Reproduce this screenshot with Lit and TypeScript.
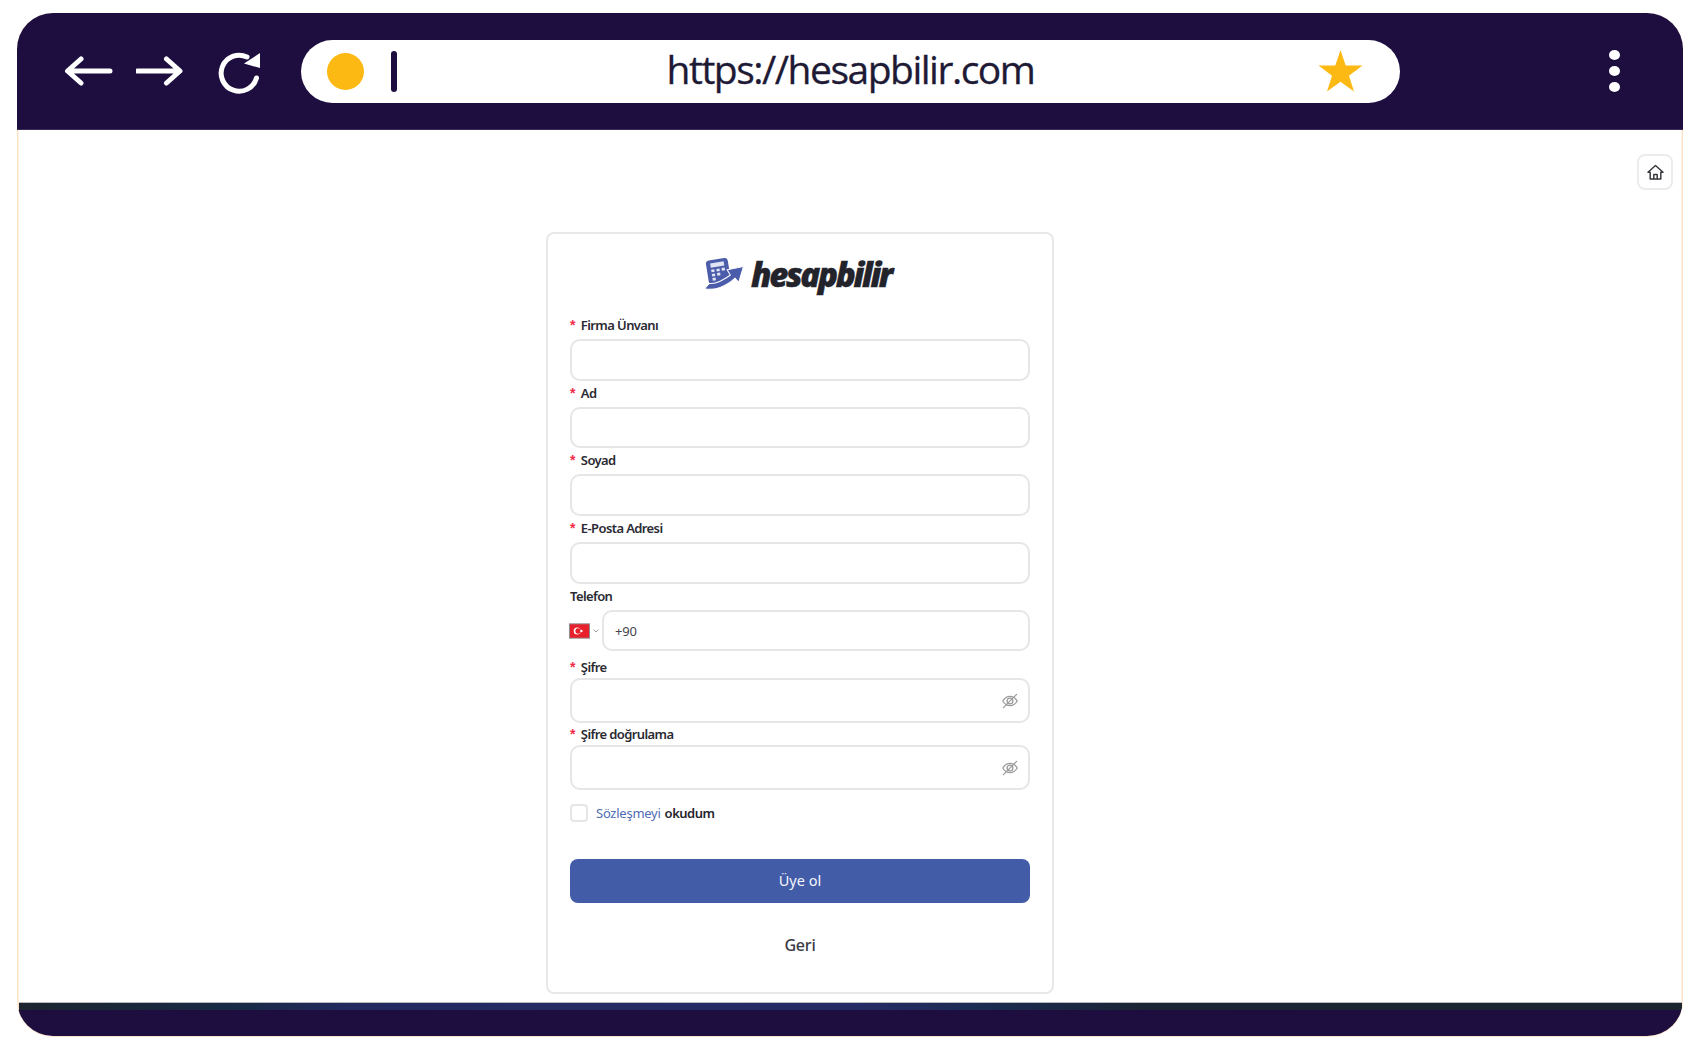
import { LitElement, html, css, svg } from "lit";
import { customElement } from "lit/decorators.js";

const eye = svg`<svg class="eye" viewBox="0 0 18 18" width="18" height="18" fill="none" stroke="#9c9c9c" stroke-width="1.3" stroke-linecap="round"><path d="M1.8 9C3.6 5.9 6 4.3 9 4.3S14.4 5.9 16.2 9C14.4 12.1 12 13.7 9 13.7S3.6 12.1 1.8 9Z"/><circle cx="9" cy="9" r="2.9"/><path d="M15.6 2.4 2.4 15.6"/></svg>`;

type Field = { label: string; req: boolean; kind?: "phone" | "pw"; tight?: boolean };
const fields: Field[] = [
  { label: "Firma Ünvanı", req: true },
  { label: "Ad", req: true },
  { label: "Soyad", req: true },
  { label: "E-Posta Adresi", req: true },
  { label: "Telefon", req: false, kind: "phone" },
  { label: "Şifre", req: true, kind: "pw" },
  { label: "Şifre doğrulama", req: true, kind: "pw", tight: true },
];

@customElement("app-root")
export class AppRoot extends LitElement {
  static styles = css`
    :host { display: block; width: 1700px; height: 1050px; padding: 13px 17px 14px; box-sizing: border-box; background: #fff; font-family: "Noto Sans", "Open Sans", sans-serif; color: #2a2a33; }
    .frame { height: 1023px; display: flex; flex-direction: column; border-radius: 36px; overflow: hidden; background: #fff; box-shadow: inset 1.5px 0 0 #fde4c8, inset -1.5px 0 0 #fde4c8, 0 1px 0 #fde4c8; }
    header { height: 117px; flex: none; background: #1e0e40; display: flex; align-items: center; box-sizing: border-box; border-bottom: 1px solid #3a2d58; }
    .navs { display: flex; align-items: center; width: 284px; flex: none; padding-left: 47px; box-sizing: border-box; gap: 23px; }
    .navs svg { display: block; flex: none; }
    .navs .reload { margin-left: 8px; margin-top: 1px; }
    .addr { width: 1099px; height: 63px; flex: none; border-radius: 32px; background: #fff; display: grid; grid-template-columns: 1fr auto 1fr; align-items: center; }
    .addr-l { display: flex; align-items: center; padding-left: 26px; gap: 27px; }
    .dot { width: 37px; height: 37px; border-radius: 50%; background: #fdb913; }
    .sep { width: 6px; height: 41px; border-radius: 3px; background: #1e0e40; }
    .url { font-family: "Open Sans", sans-serif; font-size: 39px; letter-spacing: -1.5px; color: #1e1a35; line-height: 63px; margin-top: -5px; -webkit-text-stroke: 0.3px #1e1a35; }
    .addr-r { display: flex; justify-content: flex-end; padding-right: 37px; }
    .menu { margin-left: 209px; display: flex; flex-direction: column; gap: 6px; }
    .menu i { display: block; width: 11px; height: 10px; border-radius: 50%; background: #fff; }
    main { flex: 1; position: relative; padding: 102px 0 0 529px; box-sizing: border-box; min-height: 0; }
    .home { position: absolute; top: 24px; right: 10px; width: 36px; height: 36px; box-sizing: border-box; border: 2px solid #ececec; border-radius: 8px; display: flex; align-items: center; justify-content: center; background: #fff; }
    .card { width: 508px; height: 762px; box-sizing: border-box; border: 2px solid #e8e8e8; border-radius: 8px; padding: 0 22px; background: #fff; }
    .logo { height: 79px; display: flex; align-items: center; justify-content: center; gap: 7px; padding: 2px 5px 0 0; box-sizing: border-box; }
    .logo svg { flex: none; }
    .wordmark { font-family: "Open Sans", sans-serif; font-weight: 800; font-style: italic; font-size: 33px; letter-spacing: -2.3px; color: #23232b; line-height: 40px; -webkit-text-stroke: 0.4px #23232b; }
    .lbl { height: 26.17px; display: flex; align-items: flex-end; padding-bottom: 5px; box-sizing: border-box; font-size: 13px; font-weight: 600; line-height: 18px; letter-spacing: -0.6px; color: #2a2a33; }
    .pw .lbl { height: 27.17px; padding-bottom: 2px; }
    .tight .lbl { height: 22.5px; }
    .req { color: #ee2d4a; margin-right: 6px; font-size: 14px; font-weight: 700; font-family: "Liberation Sans", sans-serif; }
    .inp { height: 41.5px; box-sizing: border-box; border: 2px solid #e6e6e6; border-radius: 10px; background: #fff; display: flex; align-items: center; }
    .pw .inp { height: 44.5px; justify-content: flex-end; padding-right: 9px; }
    .phone { display: flex; align-items: center; }
    .flag { display: block; flex: none; margin-left: -1px; }
    .chev { display: block; flex: none; margin: 0 3px 0 3px; }
    .phone .inp { flex: 1; padding-left: 11px; font-size: 13px; letter-spacing: -0.2px; color: #44444c; }
    .agree { display: flex; align-items: center; margin-top: 14.5px; height: 18px; font-size: 13px; letter-spacing: -0.25px; }
    .box { width: 18px; height: 18px; box-sizing: border-box; border: 2px solid #e6e6e6; border-radius: 4px; margin-right: 8px; background: #fff; }
    .link { color: #4f6db5; margin-right: 4px; }
    .ok { font-weight: 600; color: #25252d; letter-spacing: -0.5px; }
    .submit { margin-top: 37px; height: 44px; border-radius: 8px; background: #435ca8; color: #f4f6fb; display: flex; align-items: center; justify-content: center; font-size: 14.5px; padding-bottom: 2px; box-sizing: border-box; }
    .back { margin-top: 32px; height: 20px; line-height: 20px; text-align: center; font-size: 16px; font-weight: 500; color: #3a3a44; letter-spacing: -0.2px; }
    .strip { height: 8px; flex: none; border-top: 1px solid #b9b9bd; box-sizing: border-box; margin: 0 1.5px; background: linear-gradient(90deg, #1c2530 0%, #182a45 13%, #232a60 20%, #262b66 50%, #1b2c52 58%, #1b2433 68%, #1b2530 100%); }
    footer { height: 26px; flex: none; background: #1e0e40; }
  `;

  private renderField(f: Field) {
    const cls = `field ${f.kind === "pw" ? "pw" : ""} ${f.tight ? "tight" : ""}`;
    return html`<div class=${cls}>
      <div class="lbl">${f.req ? html`<span class="req">*</span>` : ""}${f.label}</div>
      ${f.kind === "phone"
        ? html`<div class="phone">
            <svg class="flag" viewBox="0 0 22 16" width="21" height="16"><rect x="0.5" y="0.5" width="21" height="15" fill="#e7202c" stroke="#8e8e92" stroke-width="1"/><circle cx="8.6" cy="8" r="3.7" fill="#fff"/><circle cx="9.6" cy="8" r="2.9" fill="#e7202c"/><circle cx="13" cy="8" r="1.3" fill="#fff"/></svg>
            <svg class="chev" viewBox="0 0 6 4" width="6" height="4" fill="none" stroke="#9a9a9a" stroke-width="1"><path d="M.5.5 3 3 5.500.5"/></svg>
            <div class="inp">+90</div>
          </div>`
        : html`<div class="inp">${f.kind === "pw" ? eye : ""}</div>`}
    </div>`;
  }

  render() {
    return html`<div class="frame">
      <header>
        <div class="navs">
          <svg width="49" height="30" viewBox="0 0 49 30" fill="none" stroke="#fff" stroke-width="5" stroke-linecap="round" stroke-linejoin="round"><path d="M46 15H4M17 3 3.500 15 17 27"/></svg>
          <svg width="49" height="30" viewBox="0 0 49 30" fill="none" stroke="#fff" stroke-width="5" stroke-linecap="round" stroke-linejoin="round"><path d="M1.500 15H43.500M30.500 3 44 15 30.500 27"/></svg>
          <svg class="reload" width="46" height="44" viewBox="0 0 46 44" fill="none"><path d="M40.500 28A18 18 0 1 1 31 7" stroke="#fff" stroke-width="5" stroke-linecap="round"/><path d="M44 3V18L28 13.500Z" fill="#fff"/></svg>
        </div>
        <div class="addr">
          <div class="addr-l"><div class="dot"></div><div class="sep"></div></div>
          <div class="url">https://hesapbilir.com</div>
          <div class="addr-r"><svg width="45" height="42" viewBox="0 0 45 42"><path fill="#fdb913" d="M22.500 0 27.700 15.600H44.500L31 25.700 36 41.500 22.500 31.800 9 41.500 14 25.700 .5 15.600H17.300Z"/></svg></div>
        </div>
        <div class="menu"><i></i><i></i><i></i></div>
      </header>
      <main>
        <div class="home"><svg width="17" height="17" viewBox="0 0 17 17" fill="none" stroke="#3b3b40" stroke-width="1.500" stroke-linejoin="round" stroke-linecap="round"><path d="M1 8.300 8.500 1.500 16 8.300H13.800V15H3.200V8.300Z"/><path d="M6.800 15V10.500H10.200V15"/></svg></div>
        <div class="card">
          <div class="logo">
            <svg width="40" height="33" viewBox="0 0 38 31">
              <g transform="rotate(-9 13 12)"><rect x="3" y="1" width="21" height="23" rx="3" fill="#4b5cab"/><rect x="7" y="4" width="13" height="4" fill="#dfe3f3"/><g fill="#dfe3f3"><rect x="7" y="10" width="3" height="2.500"/><rect x="12" y="10" width="3" height="2.500"/><rect x="17" y="10" width="3" height="2.500"/><rect x="7" y="14" width="3" height="2.500"/><rect x="12" y="14" width="3" height="2.500"/><rect x="7" y="18" width="3" height="2.500"/></g></g>
              <path d="M.5 29 5 24C12 25 19 20 25 16L22 11 37.500 8 33 23 29.500 19C21 27 10 31 .5 29Z" fill="#4b5cab" stroke="#fff" stroke-width="1"/>
            </svg>
            <span class="wordmark">hesapbilir</span>
          </div>
          ${fields.map((f) => this.renderField(f))}
          <div class="agree"><div class="box"></div><span class="link">Sözleşmeyi</span><span class="ok">okudum</span></div>
          <div class="submit">Üye ol</div>
          <div class="back">Geri</div>
        </div>
      </main>
      <div class="strip"></div>
      <footer></footer>
    </div>`;
  }
}
